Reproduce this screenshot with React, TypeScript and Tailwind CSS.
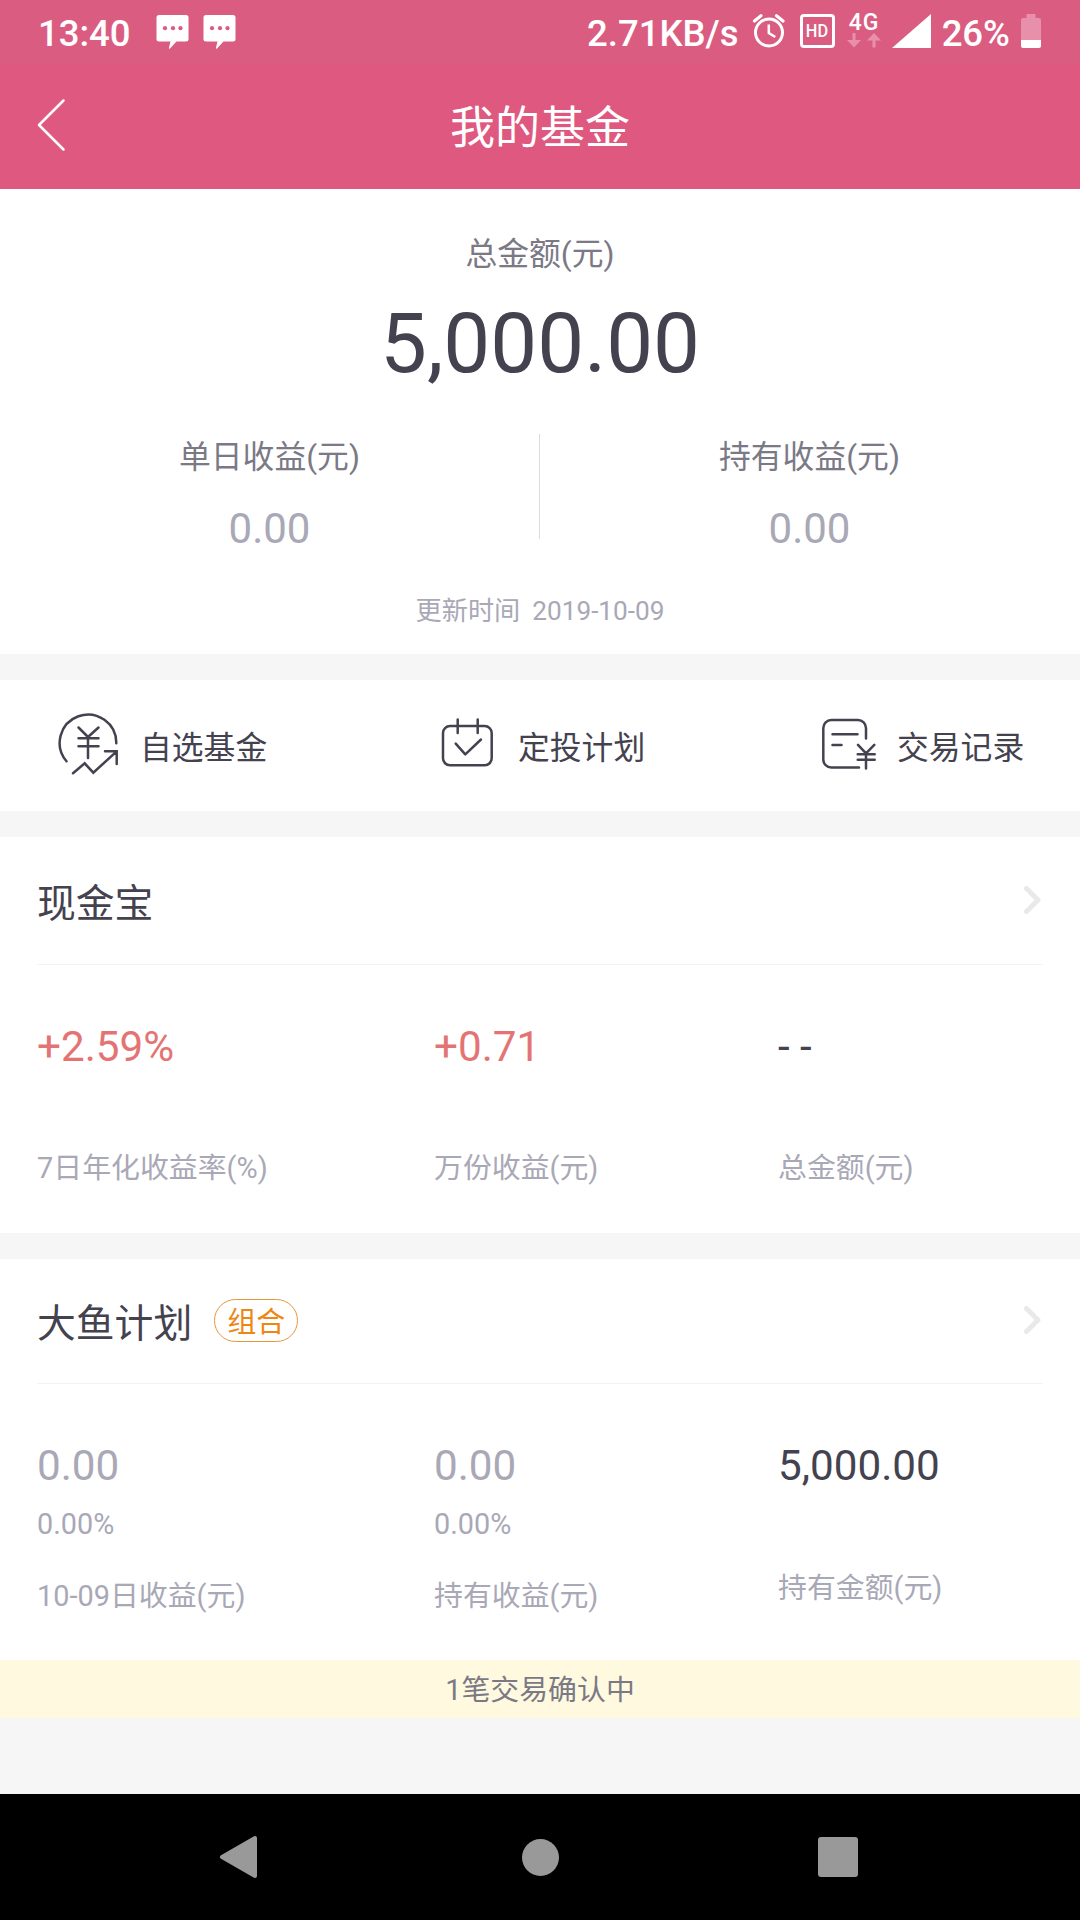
import type { ReactNode } from "react";

type StatProps = {
  value: string;
  label: string;
  percent?: string;
  valueClass?: string;
  className?: string;
  labelClass?: string;
};

const MessageIcon = () => (
  <svg width="33" height="35" viewBox="0 0 33 35">
    <path
      fill="#fff"
      d="M3 1h27a2.500 2.500 0 0 1 2.500 2.500v21.500a2.500 2.500 0 0 1-2.500 2.500h-9.500L14 34.500q-1.500 1-1-1l1.500-6H3a2.500 2.500 0 0 1-2.500-2.500V3.500A2.500 2.500 0 0 1 3 1z"
    />
    <circle cx="9" cy="14.200" r="2.100" fill="#da5d81" />
    <circle cx="17" cy="14.200" r="2.100" fill="#da5d81" />
    <circle cx="24.500" cy="14.200" r="2.100" fill="#da5d81" />
  </svg>
);

const StatusBar = () => {
  return (
    <div className="flex h-[63px] items-start bg-[#da5d81] text-[36.5px] leading-[44px] font-medium text-white">
      <span className="ml-[38px] mt-[12px] w-[118px]">13:40</span>
      <div className="mt-[14px] flex gap-[14px]">
        <MessageIcon />
        <MessageIcon />
      </div>
      <div className="ml-auto mr-[39px] flex items-start">
        <span className="mt-[12px] mr-[13px]">2.71KB/s</span>
        <svg className="mt-[13px] mr-[14px]" width="34" height="35" viewBox="0 0 34 35" fill="none" stroke="#fff">
          <circle cx="17" cy="19.500" r="13.500" strokeWidth="3" />
          <path d="M16.800 11.500v8.500l6.500 4" strokeWidth="2.500" />
          <path d="M2.500 8L9 2.800M31 8L24.500 2.800" strokeWidth="3.200" strokeLinecap="round" />
        </svg>
        <div className="mt-[14px] mr-[12px] flex h-[34px] w-[35px] items-center justify-center rounded-[4px] border-[3px] border-white text-[19px]">
          <span className="scale-x-[0.86]">HD</span>
        </div>
        <div className="mt-[14px] mr-[10px] w-[35px]">
          <div className="h-[18px] text-center text-[23px] leading-[18px] tracking-[1px]">4G</div>
          <svg width="35" height="16" viewBox="0 0 35 16" fill="#e78fab">
            <path d="M5.500 1h3v7H14l-7 7.500L0 8h5.500zM25.500 15.500h3v-7H34L27 1l-7 7.500h5.500z" />
          </svg>
        </div>
        <svg className="mt-[14px] mr-[11px]" width="39" height="34" viewBox="0 0 39 34">
          <path d="M39 0v34H0z" fill="#fff" />
        </svg>
        <span className="mt-[12px] mr-[11px]">26%</span>
        <svg className="mt-[14px]" width="20" height="34" viewBox="0 0 20 34">
          <path d="M5.500 0h9v4H18a2 2 0 0 1 2 2v20H0V6a2 2 0 0 1 2-2h3.500z" fill="#e78fab" />
          <path d="M0 26h20v6a2 2 0 0 1-2 2H2a2 2 0 0 1-2-2z" fill="#fff" />
        </svg>
      </div>
    </div>
  );
};

const Header = () => {
  return (
    <div className="flex h-[126px] items-center bg-[#df587f] text-white">
      <svg className="mb-[2px] ml-[37px]" width="29" height="54" viewBox="0 0 29 54" fill="none" stroke="#fff" strokeWidth="2.500" strokeLinecap="round" strokeLinejoin="round">
        <path d="M26.500 2.500L2 27l24.500 24.500" />
      </svg>
      <h1 className="flex-1 pr-[66px] pt-[5px] text-center text-[45px] leading-[60px]">我的基金</h1>
    </div>
  );
};

const Profit = ({ label }: { label: string }) => (
  <div className="flex-1 text-center">
    <div className="pt-px text-[31.8px] leading-[44px] text-[#7b7985]">{label}</div>
    <div className="mt-[25px] text-[42px] leading-[50px] text-[#a9a8b6]">0.00</div>
  </div>
);

const Summary = () => {
  return (
    <section className="h-[465px] bg-white pt-[43px] text-center">
      <div className="text-[31.8px] leading-[44px] text-[#7b7985]">总金额(元)</div>
      <div className="mt-[19px] text-[83.5px] leading-[98px]">5,000.00</div>
      <div className="mr-px mt-[41px] flex items-start">
        <Profit label="单日收益(元)" />
        <div className="h-[105px] w-px bg-[#dcdce0]" />
        <Profit label="持有收益(元)" />
      </div>
      <div className="mt-[39px] flex justify-center gap-[12px] text-[26.200px] leading-[36px] text-[#a9a8b6]">
        <span>更新时间</span>
        <span>2019-10-09</span>
      </div>
    </section>
  );
};

type ActionProps = { label: string; className: string; children: ReactNode };

const Action = ({ label, className, children }: ActionProps) => (
  <div className={`flex items-center ${className}`}>
    <svg width="72" height="72" viewBox="0 0 72 72" fill="none" stroke="#44424f" strokeWidth="2.500" strokeLinecap="round" strokeLinejoin="round">
      {children}
    </svg>
    <span className="pt-[5px] text-[31.8px] leading-[44px]">{label}</span>
  </div>
);

const Actions = () => {
  return (
    <section className="grid h-[131px] grid-cols-[376px_380px_auto] items-center bg-white pl-[58px]">
      <Action label="自选基金" className="gap-[10px]">
        <path d="M8.500 51.300A28.300 28.300 0 1 1 58.300 33.300" />
        <path d="M20.500 17.500L30 27l10.500-9.500M30 27v21M20.500 28.300h20M20.500 36.300h20" />
        <path d="M15 63.300l11.700-10 8.600 9.400 23.400-21.400M47 41.300h11.700V54" strokeLinejoin="miter" />
      </Action>
      <Action label="定投计划" className="gap-[12px]">
        <rect x="9" y="16" width="48.700" height="39.300" rx="7" />
        <path d="M23.700 9.500v13.500M43.700 9.500v13.500M21.700 33.700l9.600 10.600L47 29.500" />
      </Action>
      <Action label="交易记录" className="gap-[11px]">
        <path d="M45 57.500H17.300a8 8 0 0 1-8-8V18a8 8 0 0 1 8-8H44a8 8 0 0 1 8 8v10.500" />
        <path d="M18.500 24.300h25M18.500 35h9" />
        <path d="M44 34.800l8 8.500 8.300-8.500M52 43.500v15M43.700 44.300h17M43.700 49.700h17" />
      </Action>
    </section>
  );
};

type CardTitleProps = { title: string; tag?: string; className: string };

const CardTitle = ({ title, tag, className }: CardTitleProps) => (
  <div className={`mx-[37px] flex items-center border-b border-[#f2f2f2] ${className}`}>
    <h2 className="pt-[6px] text-[38.8px] leading-[54px]">{title}</h2>
    {tag && (
      <span className="ml-[22px] mt-[-1px] flex h-[43px] w-[84px] items-center justify-center rounded-full border border-[#e8963c] pt-[3px] text-[28.8px] leading-[40px] text-[#ee8613]">
        {tag}
      </span>
    )}
    <svg className="mb-[2px] ml-auto mr-[2px]" width="18" height="30" viewBox="0 0 18 30" fill="none" stroke="#e9e9e9" strokeWidth="5" strokeLinecap="round" strokeLinejoin="round">
      <path d="M3.500 3.500L15 15 3.500 26.500" />
    </svg>
  </div>
);

const Stat = ({
  value,
  label,
  percent,
  valueClass = "text-[#a9a8b6]",
  className = "",
  labelClass = "",
}: StatProps) => (
  <div className={className}>
    <div className={`text-[42.200px] leading-[50px] ${valueClass}`}>{value}</div>
    {percent && (
      <div className="mt-[13px] text-[28.8px] leading-[40px] text-[#a9a8b6]">{percent}</div>
    )}
    <div className={`text-[28.9px] leading-[40px] text-[#a9a8b6] ${labelClass}`}>{label}</div>
  </div>
);

const NavBar = () => {
  return (
    <div className="flex h-[126px] items-center justify-between bg-black pl-[219px] pr-[222px]">
      <svg width="39" height="44" viewBox="0 0 39 44">
        <path d="M3 22L36 3v38z" fill="#999" stroke="#999" strokeWidth="4" strokeLinejoin="round" />
      </svg>
      <div className="ml-[4px] size-[37px] rounded-full bg-[#999]" />
      <div className="size-[40px] rounded-[3px] bg-[#999]" />
    </div>
  );
};

export default function App() {
  return (
    <div className="flex h-[1920px] w-[1080px] flex-col overflow-hidden bg-[#f6f6f6] font-[Roboto,'Noto_Sans_CJK_SC',sans-serif] text-[#44424f]">
      <StatusBar />
      <Header />
      <Summary />
      <div className="mt-[26px]">
        <Actions />
      </div>

      <section className="mt-[26px] h-[396px] bg-white">
        <CardTitle title="现金宝" className="h-[128px]" />
        <div className="flex pl-[37px] pt-[57px]">
          <Stat className="w-[397px]" value="+2.59%" label="7日年化收益率(%)" valueClass="text-[#e47474]" labelClass="mt-[76px]" />
          <Stat className="w-[344px]" value="+0.71" label="万份收益(元)" valueClass="text-[#e47474]" labelClass="mt-[76px]" />
          <Stat value="- -" label="总金额(元)" labelClass="mt-[76px]" valueClass="text-[#44424f]" />
        </div>
      </section>

      <section className="mt-[26px] bg-white">
        <CardTitle title="大鱼计划" tag="组合" className="h-[125px]" />
        <div className="flex h-[276px] pl-[37px] pt-[57px]">
          <Stat className="w-[397px]" value="0.00" percent="0.00%" label="10-09日收益(元)" labelClass="mt-[32px]" />
          <Stat className="w-[344px]" value="0.00" percent="0.00%" label="持有收益(元)" labelClass="mt-[32px]" />
          <Stat value="5,000.00" label="持有金额(元)" valueClass="text-[#44424f]" labelClass="mt-[77px]" />
        </div>
        <div className="h-[58px] bg-[#fff9e0] pt-px text-center text-[28.9px] leading-[58px] text-[#7b7985]">
          1笔交易确认中
        </div>
      </section>

      <div className="mt-auto">
        <NavBar />
      </div>
    </div>
  );
}
